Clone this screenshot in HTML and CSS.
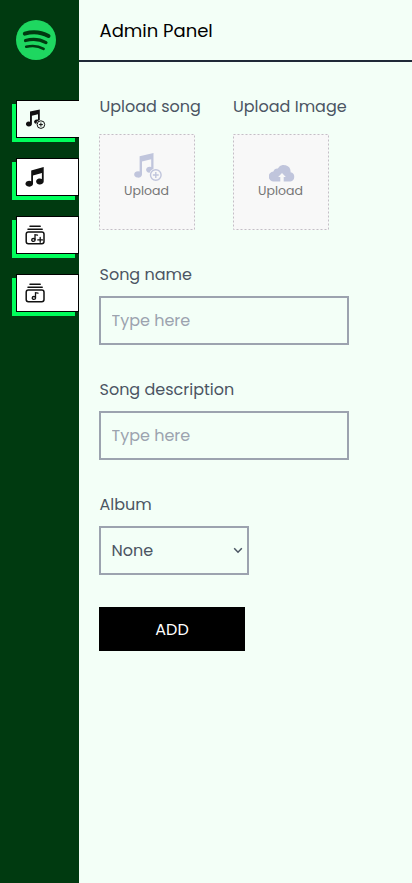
FILE: index.html
```html
<!DOCTYPE html>
<html lang="en">
<head>
<meta charset="utf-8">
<title>Admin Panel</title>
<link rel="stylesheet" href="styles.css">
</head>
<body>
<div class="app">
  <aside class="sidebar">
    <svg class="logo" viewBox="0 0 40 40"><circle cx="20" cy="20" r="20" fill="#1ed760"/><g fill="none" stroke="#003a10" stroke-linecap="round"><path d="M8.800 13.600C16.500 11.400 25.500 12.200 32.500 16" stroke-width="4"/><path d="M9.500 20.500C16.500 18.500 24 19.300 30 22.600" stroke-width="3.200"/><path d="M10.200 26.800C16.500 25.300 22.500 25.900 27.600 28.800" stroke-width="2.600"/></g></svg>
    <nav class="nav">
      <a class="tab active"><svg viewBox="0 0 20 20"><path d="M4 2.600 13.800.6V12.300A2.900 2.300 0 1 1 12 10.600V5.200L5.900 6.700V14.800A3 2.400 0 1 1 4 12.800Z"/><circle cx="14.900" cy="15.600" r="4.700" fill="#f3fff7"/><g fill="none" stroke="#111" stroke-width="1"><circle cx="14.900" cy="15.600" r="3.800"/><path d="M12.900 15.600h4M14.900 13.600v4"/></g></svg></a>
      <a class="tab"><svg viewBox="0 0 20 20"><path d="M6.200 3.500 18.700.1V14.500A3.800 3 0 1 1 16.900 11.900V6L8 8.400V17A3.800 2.900 0 1 1 6.200 14.300Z"/></svg></a>
      <a class="tab"><svg viewBox="0 0 20 20"><g fill="none" stroke="#111" stroke-width="1.500" stroke-linecap="round"><path d="M5 1.300h10.200M3 4.300h14.200"/><path d="M13 18.700H3.400Q1.200 18.700 1.200 16.500V9.300Q1.200 7.100 3.400 7.100h13.400q2.200 0 2.200 2.200V16.500q0 2.200-2.200 2.200H13"/><g stroke-width="1.300"><path d="M10 14.600V9.700l2.500.4M12.800 14.900h4.700M15.200 12.500v4.800"/><ellipse cx="8.400" cy="14.900" rx="1.700" ry="1.400"/></g></g></svg></a>
      <a class="tab"><svg viewBox="0 0 20 20"><g fill="none" stroke="#111" stroke-width="1.500" stroke-linecap="round"><path d="M5 1.300h10.200M3 4.300h14.200"/><rect x="1.200" y="7.100" width="17.800" height="11.600" rx="2.200"/><g stroke-width="1.300"><path d="M10.500 14.600V9.700l2.500.4"/><ellipse cx="8.900" cy="14.900" rx="1.700" ry="1.400"/></g></g></svg></a>
    </nav>
  </aside>
  <main class="main">
    <header class="header"><span>Admin Panel</span></header>
    <form class="form">
      <div class="uploads">
        <div class="field"><span class="label song-label">Upload song</span>
          <div class="drop"><svg class="outline"><rect x=".5" y=".5" width="95" height="95"/></svg><svg class="song-icon" viewBox="0 0 28 28"><path d="M5.600 3.200 19.500.1V16.700A3.700 3 0 1 1 17.200 14V6.300L8 8.500V21.500A3.900 3.200 0 1 1 5.600 18.500Z" fill="#c0c5dc"/><circle cx="21.800" cy="22" r="6.600" fill="#f8f8f8"/><g fill="none" stroke="#c0c5dc" stroke-width="1.400"><circle cx="21.800" cy="22" r="5.300"/><path d="M18.900 22h5.800M21.800 19.100v5.800"/></g></svg><span>Upload</span></div></div>
        <div class="field"><span class="label image-label">Upload Image</span>
          <div class="drop"><svg class="outline"><rect x=".5" y=".5" width="95" height="95"/></svg><svg class="cloud-icon" viewBox="0 0 26 17"><path d="M5 16.500A5 5 0 0 1 4.400 6.500 4.300 4.300 0 0 1 8.800 3.400 6.900 6.900 0 0 1 21.600 7.300 4.700 4.700 0 0 1 21.400 16.500H14.700V12h2.100L13 8 9.200 12h2.100V16.500Z" fill="#c0c5dc"/></svg><span>Upload</span></div></div>
      </div>
      <div class="field"><label class="label" for="name">Song name</label><input id="name" class="control" placeholder="Type here"></div>
      <div class="field"><label class="label" for="desc">Song description</label><input id="desc" class="control" placeholder="Type here"></div>
      <div class="field"><span class="label">Album</span><div class="control select"><span>None</span><svg viewBox="0 0 10 7"><path d="m1.200 1.200 3.800 4 3.800-4" fill="none" stroke="#4b5563" stroke-width="1.500"/></svg></div></div>
      <button class="add" type="button">ADD</button>
    </form>
  </main>
</div>
</body>
</html>
```
FILE: styles.css
```css
* { box-sizing: border-box; }
body { margin: 0; font-family: Poppins, Inter, sans-serif; background: #f3fff7; color: #4b5563; }
.app { display: flex; height: 883px; overflow: hidden; }
.sidebar { width: 79px; flex: none; background: #003a10; padding: 20px 0 0 16px; }
.logo { display: block; width: 40px; height: 40px; }
.nav { display: flex; flex-direction: column; gap: 20px; margin-top: 40px; }
.tab { display: flex; align-items: center; height: 38px; padding-left: 8px; background: #fff; border: 1px solid #000; box-shadow: -4px 4px #00ff5b; }
.tab.active { background: #f3fff7; border-right: 0; padding-left: 9px; }
.tab svg { width: 20px; height: 20px; overflow: visible; fill: #111; }
.main { flex: 1; min-width: 0; }
.header { height: 62px; border-bottom: 2px solid #1f2937; padding: 17px 0 0 20.500px; font-size: 18px; line-height: 28px; color: #000; }
.form { display: flex; flex-direction: column; align-items: flex-start; gap: 32px; padding: 33px 20px 0; }
.uploads { display: flex; gap: 32px; }
.field { display: flex; flex-direction: column; gap: 9px; }
.uploads .field { gap: 15px; }
.label { padding-left: .5px; font-size: 16px; line-height: 24px; white-space: nowrap; }
.form > .field { margin-top: 1px; }
.song-label { width: 102px; }
.label.image-label { padding-left: 0; }
.drop { position: relative; width: 96px; height: 96px; padding: 1px 1px 0 0; background: #f8f8f8; display: flex; flex-direction: column; align-items: center; justify-content: center; font-size: 12.500px; line-height: 15px; color: #757575; }
.outline { position: absolute; inset: 0; width: 96px; height: 96px; }
.outline rect { fill: none; stroke: #c4bfc6; stroke-dasharray: 2 2; }
.song-icon { width: 28px; height: 28px; margin: -14px 0 2px 2px; }
.cloud-icon { width: 26px; height: 17px; margin: -2px 0 1px 2px; }
.control { width: 250px; height: 49px; border: 2px solid #9ca3af; background: transparent; padding: 0 10.500px; font: inherit; font-size: 16px; color: #4b5563; outline: 0; border-radius: 0; }
.control::placeholder { color: #9ca3af; opacity: 1; }
.select { width: 150px; display: flex; align-items: center; justify-content: space-between; padding-right: 4px; }
.select svg { width: 10px; height: 7px; }
.add { width: 146px; height: 44px; border: 0; background: #000; color: #fff; font: inherit; font-size: 16px; padding: 0; }
```
